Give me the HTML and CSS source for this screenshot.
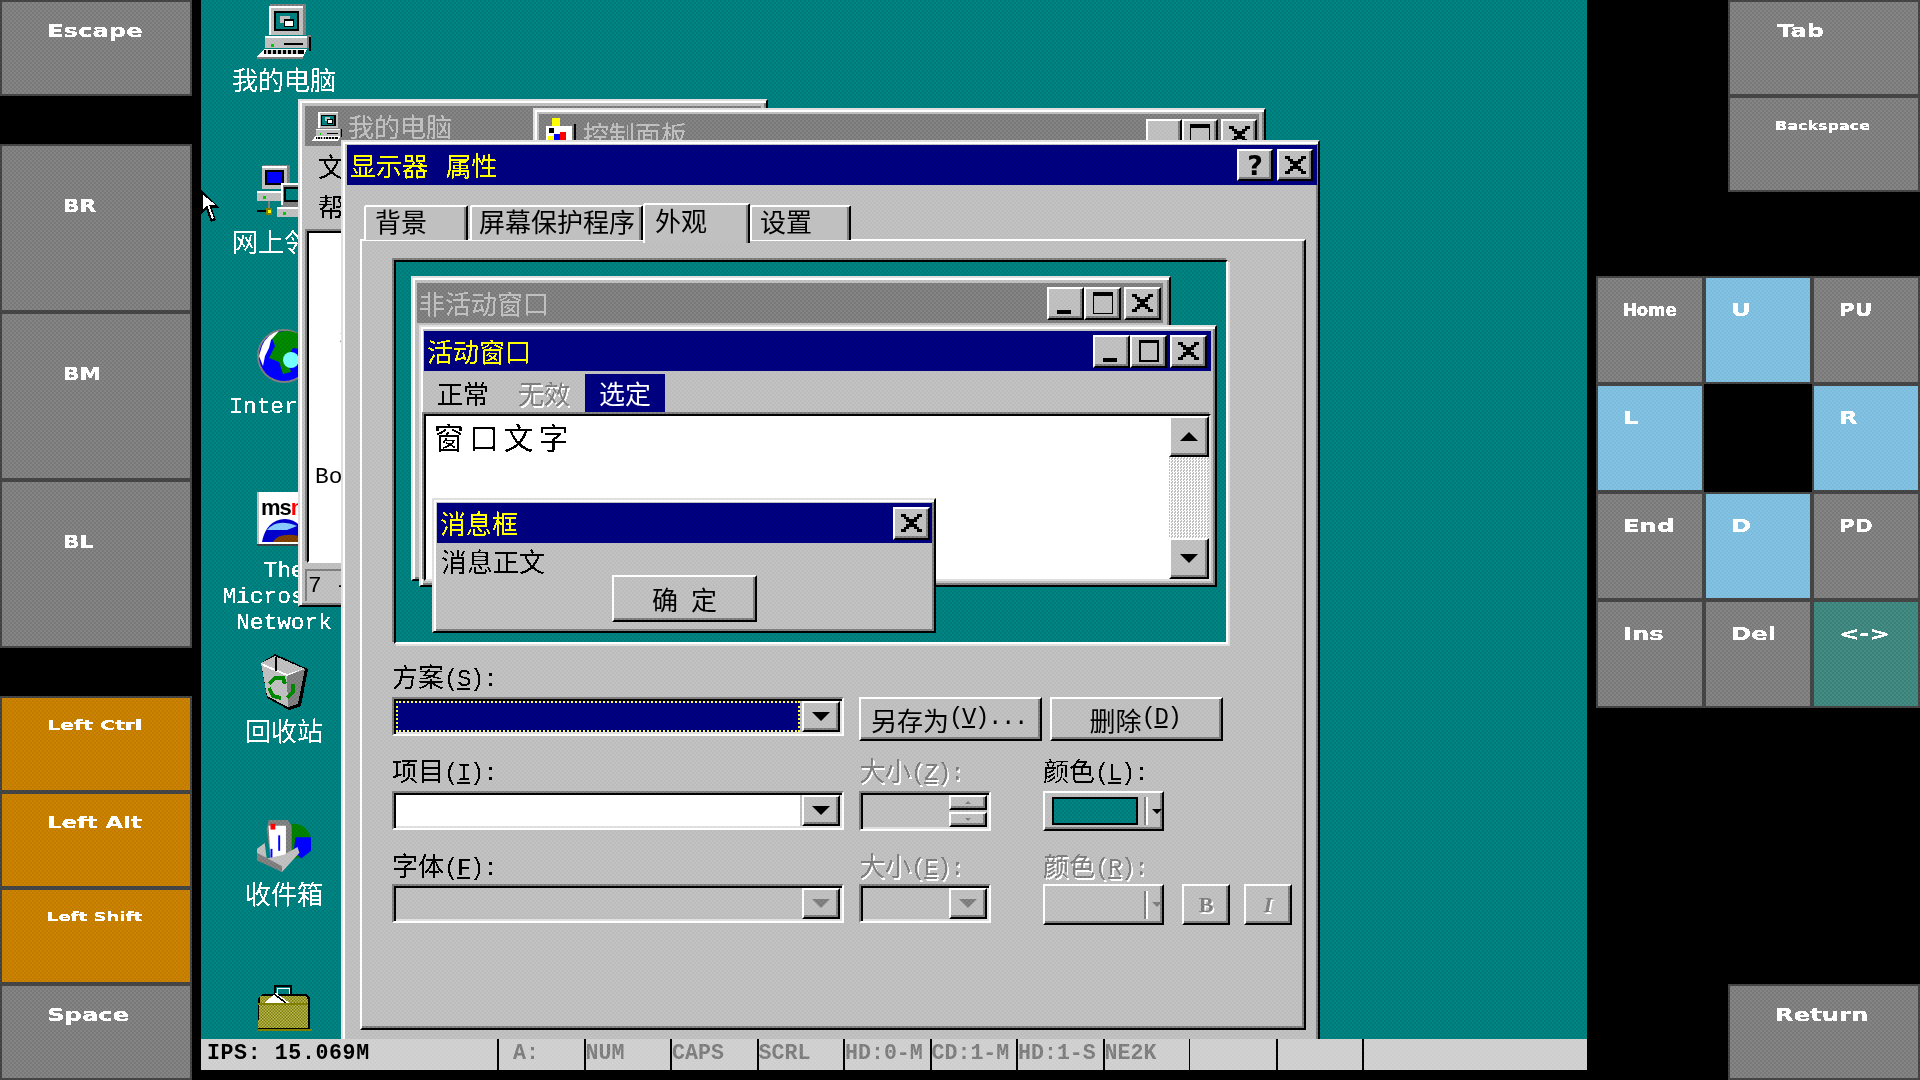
FILE: index.html
```html
<!DOCTYPE html>
<html lang="zh-CN">
<head>
<meta charset="utf-8">
<title>Win95 emulator</title>
<link rel="stylesheet" href="styles.css">
</head>
<body>
<svg class="defs" width="0" height="0" aria-hidden="true">
  <filter id="crisp" color-interpolation-filters="sRGB" x="-5%" y="-5%" width="110%" height="110%">
    <feComponentTransfer><feFuncA type="discrete" tableValues="0 1 1"/></feComponentTransfer>
  </filter>
  <filter id="crisp-thin" color-interpolation-filters="sRGB" x="-5%" y="-5%" width="110%" height="110%">
    <feComponentTransfer><feFuncA type="discrete" tableValues="0 1"/></feComponentTransfer>
  </filter>
  <pattern id="chk" width="3" height="3" patternUnits="userSpaceOnUse">
    <rect width="3" height="3" fill="#b8b860"/><rect width="1.5" height="1.5" fill="#808000"/><rect x="1.5" y="1.5" width="1.5" height="1.5" fill="#808000"/>
  </pattern>
  <symbol id="g-x" viewBox="0 0 8 7"><path shape-rendering="crispEdges" d="M0 0h2v1h1v1h2V1h1V0h2v1H7v1H6v1H5v1h1v1h1v1h1v1H6V6H5V5H3v1H2v1H0V6h1V5h1V4h1V3H2V2H1V1H0z"/></symbol>
  <symbol id="i-pc" viewBox="0 0 54 56">
    <g shape-rendering="crispEdges">
      <rect x="13" y="1" width="36" height="30" fill="#808080"/>
      <rect x="12" y="3" width="34" height="29" fill="#c0c0c0"/>
      <rect x="12" y="3" width="34" height="2" fill="#fff"/><rect x="12" y="3" width="2" height="29" fill="#fff"/>
      <rect x="46" y="3" width="3" height="29" fill="#808080"/>
      <rect x="17" y="8" width="25" height="20" fill="#000"/>
      <rect x="19" y="10" width="21" height="16" fill="#008080"/>
      <rect x="23" y="13" width="10" height="7" fill="#c0c0c0"/><rect x="27" y="16" width="10" height="8" fill="#000"/><rect x="28" y="18" width="8" height="5" fill="#fff"/>
      <rect x="8" y="33" width="42" height="12" fill="#c0c0c0"/><rect x="8" y="33" width="42" height="2" fill="#fff"/>
      <rect x="50" y="32" width="4" height="13" fill="#808080"/><rect x="52" y="34" width="2" height="14" fill="#000"/>
      <rect x="14" y="41" width="3" height="3" fill="#0c0"/><rect x="27" y="40" width="19" height="2" fill="#000"/>
      <polygon points="7,46 50,46 46,54 0,54" fill="#fff"/>
      <rect x="7" y="47" width="40" height="4" fill="#000"/>
      <path d="M9 47h2v4H9zM14 47h2v4h-2zM19 47h2v4h-2zM24 47h2v4h-2zM29 47h2v4h-2zM34 47h2v4h-2zM39 47h2v4h-2z" fill="#c0c0c0"/>
      <rect x="0" y="54" width="46" height="2" fill="#808080"/>
    </g>
  </symbol>
</svg>

<div class="app">
  <aside class="col-left">
    <div class="key h96"><span class="lbl">Escape</span></div>
    <div class="gap48"></div>
    <div class="key h168"><span class="lbl lbl-nar">BR</span></div>
    <div class="key h168"><span class="lbl lbl-nar">BM</span></div>
    <div class="key h168"><span class="lbl lbl-nar">BL</span></div>
    <div class="gap48"></div>
    <div class="key h96 orange"><span class="lbl lbl-ctrl">Left Ctrl</span></div>
    <div class="key h96 orange"><span class="lbl lbl-alt">Left Alt</span></div>
    <div class="key h96 orange"><span class="lbl lbl-shift">Left Shift</span></div>
    <div class="key h96"><span class="lbl">Space</span></div>
  </aside>

  <main class="mid">
    <div class="screen">
      <div class="dicon d1">
        <svg class="ico"><use href="#i-pc"/></svg>
        <span class="dlabel">我的电脑</span>
      </div>
      <div class="dicon d2">
        <svg class="ico" viewBox="0 0 54 56" shape-rendering="crispEdges">
          <rect x="6" y="0" width="27" height="24" fill="#808080"/><rect x="5" y="1" width="25" height="23" fill="#c0c0c0"/><rect x="5" y="1" width="25" height="2" fill="#fff"/>
          <rect x="8" y="5" width="19" height="15" fill="#000"/><rect x="10" y="7" width="15" height="11" fill="#00f"/>
          <rect x="0" y="26" width="28" height="10" fill="#c0c0c0"/><rect x="0" y="26" width="28" height="2" fill="#fff"/><rect x="6" y="31" width="3" height="3" fill="#0c0"/>
          <rect x="11" y="36" width="2" height="10" fill="#808080"/>
          <rect x="0" y="45" width="14" height="2" fill="#000"/><rect x="9" y="43" width="6" height="7" fill="#808000"/><rect x="11" y="45" width="3" height="3" fill="#ff0"/>
          <rect x="24" y="18" width="27" height="24" fill="#808080"/><rect x="24" y="18" width="25" height="2" fill="#fff"/><rect x="24" y="18" width="2" height="22" fill="#fff"/>
          <rect x="27" y="22" width="19" height="15" fill="#000"/><rect x="29" y="24" width="15" height="11" fill="#008080"/>
          <rect x="20" y="42" width="34" height="10" fill="#c0c0c0"/><rect x="20" y="42" width="34" height="2" fill="#fff"/><rect x="26" y="47" width="3" height="3" fill="#0c0"/>
        </svg>
        <span class="dlabel">网上邻居</span>
      </div>
      <div class="dicon d3">
        <svg class="ico" viewBox="0 0 54 56">
          <circle cx="27" cy="28" r="27" fill="#808080"/>
          <circle cx="27" cy="28" r="25" fill="#00f"/>
          <path d="M14 8 Q28-2 46 8 L50 22 36 20 30 30 34 44 26 46 22 34 12 30 18 18Z" fill="#080"/>
          <path d="M5 18 Q10 6 22 3 L14 12 12 20 8 28 6 38 2 28Z" fill="#fff"/>
          <circle cx="34" cy="32" r="8" fill="#7ff"/>
        </svg>
        <span class="dlabel mono">Internet</span>
      </div>
      <div class="dicon d4">
        <svg class="ico" viewBox="0 0 54 56">
          <rect x="0" y="0" width="54" height="53" fill="#fff"/>
          <rect x="0" y="52" width="54" height="2" fill="#404040"/>
          <rect x="0" y="0" width="2" height="52" fill="#c0c0c0"/>
          <text x="4" y="23" class="msn">ms<tspan fill="#f00">n</tspan></text>
          <path d="M5 50 Q9 28 28 27 Q46 28 50 50Z" fill="#00c"/>
          <path d="M10 38 Q20 26 40 34 L30 38Z" fill="#8cf"/>
          <path d="M16 50 Q22 40 42 44 L44 50Z" fill="#804000"/>
        </svg>
        <span class="dlabel mono msn-label">The<br>Microsoft<br>Network</span>
      </div>
      <div class="dicon d5">
        <svg class="ico" viewBox="0 0 54 56" shape-rendering="crispEdges">
          <polygon points="4,9 18,0 51,15 44,52 32,56 10,44" fill="#000"/>
          <polygon points="4,9 18,2 48,15 41,50 31,53 10,42" fill="#c0c0c0"/>
          <polygon points="30,22 48,15 41,50 31,53" fill="#808080"/>
          <polygon points="4,9 30,20 48,14 30,22 6,12" fill="#fff"/>
          <rect x="18" y="3" width="2" height="14" fill="#000"/>
          <path d="M12 30 L18 24 L26 24 L28 30 M36 30 L36 38 L30 44 M12 34 L16 42 L24 44" fill="none" stroke="#080" stroke-width="4"/>
        </svg>
        <span class="dlabel">回收站</span>
      </div>
      <div class="dicon d6">
        <svg class="ico" viewBox="0 0 56 56">
          <circle cx="38" cy="24" r="18" fill="#008000"/><path d="M40 20h16v14L46 42 38 34Z" fill="#00f"/>
          <polygon points="12,2 32,2 36,8 36,38 14,42 10,12" fill="#808080"/>
          <polygon points="12,8 30,8 30,38 14,42" fill="#fff"/>
          <rect x="14" y="6" width="5" height="6" fill="#f00"/><rect x="22" y="18" width="2" height="16" fill="#00f"/><rect x="14" y="32" width="2" height="10" fill="#00f"/>
          <polygon points="0,32 8,26 10,42 28,38 42,30 44,36 26,56 0,42" fill="#c0c0c0"/>
          <polygon points="0,36 0,44 26,56 26,50" fill="#808080"/>
        </svg>
        <span class="dlabel">收件箱</span>
      </div>
      <div class="dicon d7">
        <svg class="ico" viewBox="0 0 56 46" shape-rendering="crispEdges">
          <path d="M19 9V1h16v8" fill="none" stroke="#000" stroke-width="2"/>
          <path d="M21 9V3h12v6" fill="none" stroke="#fff" stroke-width="1"/>
          <polygon points="6,9 50,9 54,13 54,44 2,44 2,13" fill="#000"/>
          <polygon points="4,11 50,11 52,15 52,43 2,43" fill="url(#chk)"/>
          <polygon points="8,18 20,8 34,18" fill="#fff"/>
          <path d="M18 9l12 9" fill="none" stroke="#000" stroke-width="1.5"/>
          <rect x="2" y="18" width="50" height="2" fill="#808000"/>
          <rect x="2" y="44" width="54" height="2" fill="#808000"/>
        </svg>
      </div>

      <section class="win win-mypc">
        <header class="tbar tbar-off tbar-mypc">
          <svg class="ico-small"><use href="#i-pc"/></svg>
          <span class="ttext-off">我的电脑</span>
        </header>
        <nav class="mypc-menu"><span>文</span><span>帮</span></nav>
        <div class="mypc-client"><span class="frag mono">3</span><span class="bo mono">Bo</span></div>
        <div class="mypc-status"><span class="mono">7 -</span></div>
      </section>

      <section class="win win-ctrl">
        <header class="tbar tbar-off tbar-ctrl">
          <svg class="ico-cp" viewBox="0 0 30 24" shape-rendering="crispEdges">
            <rect x="6" y="0" width="8" height="12" fill="#ff0"/><rect x="0" y="8" width="26" height="16" fill="#fff"/>
            <rect x="3" y="10" width="5" height="5" fill="#000"/><rect x="14" y="14" width="6" height="10" fill="#f00"/><rect x="8" y="16" width="6" height="8" fill="#00f"/><rect x="2" y="18" width="6" height="6" fill="#ff0"/>
            <rect x="28" y="6" width="2" height="18" fill="#000"/>
          </svg>
          <span class="ttext-off">控制面板</span>
          <div class="capbtns ctrl-btns">
            <span class="btn cap cap-wide"></span>
            <span class="btn cap cap-wide"><i class="g-max g-max-thin"></i></span>
            <span class="btn cap cap-wide cap-sep"><svg class="g-x"><use href="#g-x"/></svg></span>
          </div>
        </header>
      </section>

      <section class="win dialog">
        <header class="tbar tbar-on tbar-dialog">
          <span class="ttext">显示器&nbsp;&nbsp;&nbsp;属性</span>
          <div class="capbtns">
            <span class="btn cap cap-wide q">?</span>
            <span class="btn cap cap-wide cap-sep"><svg class="g-x"><use href="#g-x"/></svg></span>
          </div>
        </header>
        <div class="tabs">
          <span class="tab t1">背景</span>
          <span class="tab t2">屏幕保护程序</span>
          <span class="tab tab-on t3">外观</span>
          <span class="tab t4">设置</span>
        </div>
        <div class="pane">
          <div class="preview">
            <section class="win pv-inactive">
              <header class="tbar tbar-off pv-tbar">
                <span class="ttext-off pv-ttext">非活动窗口</span>
                <div class="capbtns">
                  <span class="btn cap"><i class="g-min"></i></span>
                  <span class="btn cap"><i class="g-max g-max-thin"></i></span>
                  <span class="btn cap cap-sep"><svg class="g-x"><use href="#g-x"/></svg></span>
                </div>
              </header>
            </section>
            <section class="win pv-active">
              <header class="tbar tbar-on pv-tbar">
                <span class="ttext">活动窗口</span>
                <div class="capbtns">
                  <span class="btn cap"><i class="g-min"></i></span>
                  <span class="btn cap"><i class="g-max"></i></span>
                  <span class="btn cap cap-sep"><svg class="g-x"><use href="#g-x"/></svg></span>
                </div>
              </header>
              <nav class="pv-menu">
                <span class="mi">正常</span>
                <span class="mi disabled">无效</span>
                <span class="mi mi-sel">选定</span>
              </nav>
              <div class="pv-client">
                <div class="pv-text">窗口文字</div>
                <div class="sbar">
                  <span class="btn sbtn"><i class="tri tri-up"></i></span>
                  <span class="strack"></span>
                  <span class="btn sbtn"><i class="tri"></i></span>
                </div>
              </div>
            </section>
            <section class="win pv-msg">
              <header class="tbar tbar-on msg-tbar">
                <span class="ttext">消息框</span>
                <div class="capbtns"><span class="btn cap"><svg class="g-x"><use href="#g-x"/></svg></span></div>
              </header>
              <div class="msg-text txt">消息正文</div>
              <span class="btn msg-ok txt">确定</span>
            </section>
          </div>

          <div class="form">
            <div class="group g1">
              <label class="flabel">方案<span class="lat">(<u>S</u>):</span></label><span></span><span></span>
              <div class="combo c-wide"><span class="field field-sel"></span><span class="btn drop"><i class="tri"></i></span></div>
              <div class="btnpair">
                <span class="btn pbtn pb1 txt">另存为<span class="lat">(<u>V</u>)...</span></span>
                <span class="btn pbtn pb2 txt">删除<span class="lat">(<u>D</u>)</span></span>
              </div>
            </div>
            <div class="group g2">
              <label class="flabel">项目<span class="lat">(<u>I</u>):</span></label>
              <label class="flabel disabled">大小<span class="lat">(<u>Z</u>):</span></label>
              <label class="flabel">颜色<span class="lat">(<u>L</u>):</span></label>
              <div class="combo c-wide"><span class="field field-white"></span><span class="btn drop"><i class="tri"></i></span></div>
              <div class="combo c-small c-spin"><span class="field"></span><span class="spin"><span class="btn sp"><i class="tri tri-tiny tri-up"></i></span><span class="btn sp"><i class="tri tri-tiny"></i></span></span></div>
              <div class="btn colorbtn"><span class="swatch"></span><span class="csep"></span><i class="tri tri-small"></i></div>
            </div>
            <div class="group g3">
              <label class="flabel">字体<span class="lat">(<u>F</u>):</span></label>
              <label class="flabel disabled">大小<span class="lat">(<u>E</u>):</span></label>
              <label class="flabel disabled">颜色<span class="lat">(<u>R</u>):</span></label>
              <div class="combo c-wide"><span class="field"></span><span class="btn drop"><i class="tri tri-off"></i></span></div>
              <div class="combo c-small"><span class="field"></span><span class="btn drop"><i class="tri tri-off"></i></span></div>
              <div class="lastrow">
                <div class="btn colorbtn colorbtn-off"><span class="swatch swatch-off"></span><span class="csep"></span><i class="tri tri-small tri-off"></i></div>
                <span class="btn fmt disabled">B</span>
                <span class="btn fmt fmt-i disabled">I</span>
              </div>
            </div>
          </div>
        </div>
      </section>

      <svg class="cursor" viewBox="0 0 20 33" shape-rendering="crispEdges">
        <polygon points="0,0 0,24 5,19 10,32 15,30 11,18 19,18" fill="#000"/>
        <polygon points="2,5 2,19 6,15 11,29 13,28 8,15 15,15" fill="#fff"/>
      </svg>
    </div>
    <footer class="status">
      <span class="cell cell-ips">IPS: 15.069M</span>
      <span class="cell cell-a">A:</span>
      <span class="cell">NUM</span>
      <span class="cell">CAPS</span>
      <span class="cell">SCRL</span>
      <span class="cell">HD:0-M</span>
      <span class="cell">CD:1-M</span>
      <span class="cell">HD:1-S</span>
      <span class="cell">NE2K</span>
      <span class="cell cell-thin"></span>
      <span class="cell"></span>
      <span class="cell cell-last"></span>
    </footer>
  </main>

  <aside class="col-right">
    <div class="key h96 right-key"><span class="lbl lbl-tab">Tab</span></div>
    <div class="key h96 right-key"><span class="lbl lbl-back">Backspace</span></div>
    <div class="pad">
      <div class="key pk"><span class="lbl lbl-home">Home</span></div>
      <div class="key pk blue"><span class="lbl">U</span></div>
      <div class="key pk"><span class="lbl lbl-nar">PU</span></div>
      <div class="key pk blue"><span class="lbl">L</span></div>
      <div class="pk-empty"></div>
      <div class="key pk blue"><span class="lbl">R</span></div>
      <div class="key pk"><span class="lbl">End</span></div>
      <div class="key pk blue"><span class="lbl">D</span></div>
      <div class="key pk"><span class="lbl lbl-nar">PD</span></div>
      <div class="key pk"><span class="lbl">Ins</span></div>
      <div class="key pk"><span class="lbl">Del</span></div>
      <div class="key pk teal"><span class="lbl">&lt;-&gt;</span></div>
    </div>
    <div class="key h96 right-key key-return"><span class="lbl">Return</span></div>
  </aside>
</div>
<div class="dither"></div>
</body>
</html>
```
FILE: styles.css
```css
*{box-sizing:border-box}
html,body{margin:0;padding:0;background:#000}
body{width:1920px;height:1080px;overflow:hidden;position:relative;font-family:"Noto Sans CJK SC","Liberation Sans",sans-serif;color:#000}
.defs{position:absolute}
.app{display:flex;width:1920px;height:1080px;background:#000}
.dither{position:absolute;inset:0;pointer-events:none;mix-blend-mode:overlay;background:repeating-conic-gradient(#858585 0 25%,#787878 0 50%) 0 0/4px 4px}

/* key columns */
.col-left{width:192px;display:flex;flex-direction:column;flex:none}
.gap48{height:48px;flex:none}
.col-right{width:333px;margin-left:auto;flex:none;display:flex;flex-direction:column;align-items:flex-end}
.key{border:2px solid #454545;background:#808080;flex:none}
.h96{height:96px;width:192px;padding:16px 0 0 45px}
.h168{height:168px;width:192px;padding:47px 0 0 61px}
.orange{background:#c88000}
.blue{background:#80c0e0}
.teal{background:#408880}
.lbl{display:inline-block;color:#fff;font:700 18px/20px "DejaVu Sans",sans-serif;transform:scaleX(1.35);transform-origin:0 0;white-space:nowrap;filter:url(#crisp)}
.lbl-ctrl{font-size:14px;transform:translateY(-3px) scaleX(1.47)}
.lbl-alt{font-size:16px;transform:translateY(-1px) scaleX(1.42)}
.lbl-shift{font-size:13px;transform:translateY(-4px) scaleX(1.39)}
.lbl-back{font-size:13px;transform:translateY(-3px) scaleX(1.23)}
.lbl-tab{margin-left:2px}
.lbl-home{transform:scaleX(.92)}
.lbl-nar{transform:scaleX(1.2)}
.pad{display:grid;grid-template-columns:repeat(3,108px);grid-auto-rows:108px;width:324px;margin-top:84px}
.pk{padding:19px 0 0 25px}
.key-return{margin-top:auto}

/* emulator surface */
.mid{width:1386px;margin-left:9px;flex:none;display:flex;flex-direction:column}
.screen{height:1039px;position:relative;overflow:hidden;background:#008080;flex:none}
.status{height:31px;background:#d0d0d0;display:flex;flex:none;font:700 21.6px/29px "Liberation Mono",monospace;color:#808080}
.cell{width:86.5px;border-left:2px solid #000;white-space:nowrap;padding-left:0;overflow:visible}
.cell-ips{width:296px;border-left:0;padding-left:6px;color:#000;letter-spacing:.6px}
.cell-a{padding-left:14px}
.cell-thin{border-left-width:1px}
.cell-last{flex:1}

/* desktop icons */
.dicon{position:absolute;left:13px;width:140px;display:flex;flex-direction:column;align-items:center}
.ico{width:54px;height:56px;display:block;flex:none}
.dlabel{color:#fff;font-size:26px;line-height:30px;margin-top:5px;white-space:nowrap;filter:url(#crisp-thin)}
.mono{font-family:"Liberation Mono",monospace;font-size:22.8px}
.dlabel.mono{line-height:26px;text-align:center;margin-top:10px;filter:url(#crisp)}
.msn{font:900 22px "Liberation Sans",sans-serif;letter-spacing:-1px}
.d1{top:3px}
.d2{top:165px}
.d3{top:328px}
.d4{top:492px}
.d5{top:654px}
.d6{top:817px}
.d7{top:985px}
.d7 .ico{height:46px;width:56px}
.cursor{position:absolute;left:0;top:190px;width:20px;height:33px}

/* windows */
.win{position:absolute;background:#c0c0c0;border:2px solid;border-color:#e0e0e0 #000 #000 #e0e0e0;box-shadow:inset 2px 2px 0 #fff,inset -2px -2px 0 #808080}
.tbar{display:flex;align-items:center;height:40px;flex:none}
.tbar-off{background:#808080}
.tbar-on{background:#000080}
.ttext{color:#ff0;font-size:26px;line-height:30px;margin-left:3px;white-space:nowrap;filter:url(#crisp-thin)}
.ttext-off{color:#c0c0c0;font-size:26px;line-height:30px;white-space:nowrap;filter:url(#crisp-thin)}
.capbtns{margin-left:auto;display:flex;align-items:center}

.btn{background:#c0c0c0;border:2px solid;border-color:#fff #000 #000 #fff;box-shadow:inset -2px -2px 0 #808080;display:flex;align-items:center;justify-content:center;flex:none}
.cap{width:37px;height:33px;margin-right:0}
.cap-wide{width:36px;height:32px}
.cap-sep{margin-left:3px}
.q{font:700 27px/1 "DejaVu Sans",sans-serif;margin-right:1px;filter:none}
.g-x{width:21px;height:18px;display:block}
.g-min{display:block;width:14px;height:4px;background:#000;align-self:flex-end;margin:0 4px 4px 0}
.g-max{display:block;width:20px;height:22px;border:2px solid #000;border-top-width:3px}
.g-max-thin{border-width:1px;border-top-width:4px}

/* my computer behind */
.win-mypc{left:97px;top:99px;width:470px;height:508px;padding:5px 0 0 5px}
.tbar-mypc{margin-right:5px;height:40px;padding:0 0 0 5px;gap:4px}
.ico-small{width:34px;height:32px;flex:none}
.mypc-menu{display:flex;flex-direction:column;font-size:26px;line-height:40px;padding-left:13px;height:85px;white-space:nowrap;filter:url(#crisp-thin)}
.mypc-client{height:332px;width:50px;margin-left:2px;background:#fff;border:2px solid;border-color:#000 transparent transparent #000;padding-left:6px;padding-top:93px;overflow:hidden;box-shadow:-2px -2px 0 #808080;display:flex;flex-direction:column;align-items:flex-start}
.frag{line-height:26px;margin-left:24px;height:26px}
.bo{line-height:26px;margin-top:112px}
.mypc-status{margin-top:6px;height:32px;width:60px;padding-left:1px;line-height:28px;border-top:2px solid #808080;border-left:2px solid #808080}
.win-ctrl{left:332px;top:108px;width:733px;height:100px;padding:4px 5px 0 4px}
.tbar-ctrl{height:40px;padding-left:7px;gap:7px;align-items:flex-start}
.tbar-ctrl .ttext-off{margin-top:5px}
.ico-cp{width:30px;height:24px;flex:none;margin-top:4px}
.ctrl-btns{margin-right:2px;margin-top:5px}

/* dialog */
.dialog{left:140px;top:140px;width:979px;height:910px;padding:3px 1px 0 4px}
.tbar-dialog{padding-right:4px}
.tabs{display:flex;align-items:flex-end;margin:17px 0 0 17px;height:38px;position:relative;z-index:1}
.tab{height:35px;border:2px solid;border-bottom:0;border-color:#fff #000 transparent #fff;border-radius:3px 3px 0 0;box-shadow:inset -2px 0 0 #808080;background:#c0c0c0;font-size:26px;line-height:28px;padding-left:9px;white-space:nowrap;filter:url(#crisp-thin)}
.t1{width:104px;margin-right:2px}
.t2{width:173px;padding-left:7px}
.t3{width:107px}
.t4{width:101px;padding-left:8px}
.tab-on{height:40px;margin-bottom:-3px;padding-left:10px;line-height:29px;position:relative;top:0}
.pane{margin:-1px 0 0 13px;width:946px;height:791px;background:#c0c0c0;border:2px solid;border-color:#fff #000 #000 #fff;box-shadow:inset -2px -2px 0 #808080;padding:19px 0 0 32px;overflow:visible}

.preview{position:relative;width:834px;height:384px;background:#008080;border:2px solid;border-color:#000 #fff #fff #000;box-shadow:-2px -2px 0 #808080,2px 2px 0 #e0e0e0}
.pv-inactive{left:15px;top:14px;width:760px;height:305px;padding:5px 6px 0 4px}
.pv-tbar{padding-right:0}
.pv-inactive .capbtns{margin-right:2px}
.pv-active .capbtns{margin-right:4px}
.pv-ttext{margin-left:2px}
.pv-active{left:23px;top:63px;width:798px;height:262px;padding:4px 4px 0 3px}
.pv-menu{display:flex;gap:1px;height:41px;margin-left:-1px;padding-top:3px;font-size:26px;line-height:38px}
.mi{padding:0 14px;height:38px;white-space:nowrap;filter:url(#crisp-thin)}
.disabled{color:#808080;text-shadow:1.5px 1.5px 0 #fff}
.mi-sel{background:#000080;color:#fff}
.pv-client{display:flex;height:167px;margin:2px 0 0 0;background:#fff;border:2px solid;border-color:#000 #e0e0e0 #e0e0e0 #000;box-shadow:-2px -2px 0 #808080}
.pv-text{flex:1;font-size:30px;line-height:38px;letter-spacing:4.8px;padding:1px 0 0 8px;filter:url(#crisp-thin)}
.sbar{width:40px;display:flex;flex-direction:column;flex:none}
.sbtn{height:41px}
.strack{flex:1;background:repeating-conic-gradient(#fff 0 25%,#c0c0c0 0 50%) 0 0/3px 3px}
.tri{display:block;width:0;height:0;border-left:9px solid transparent;border-right:9px solid transparent;border-top:9px solid #000}
.tri-up{border-top:0;border-bottom:9px solid #000}
.tri-small{border-left-width:5px;border-right-width:5px;border-top-width:5px}
.tri-tiny{border-left-width:3px;border-right-width:3px;border-top-width:3px;border-top-color:#808080}
.tri-tiny.tri-up{border-top:0;border-bottom:3px solid #808080}
.tri-off{border-top-color:#808080}
.pv-msg{left:36px;top:236px;width:504px;height:135px;padding:3px 2px 0 3px}
.msg-tbar{padding-right:2px}
.msg-text{margin:3px 0 0 4px;line-height:30px;font-size:26px}
.txt{filter:url(#crisp-thin)}
.msg-ok{width:145px;height:47px;margin:-1px 0 0 175px;font-size:26px;letter-spacing:13px;text-indent:13px}

.form{margin:18px 0 0 -2px;display:flex;flex-direction:column}
.group{display:grid;grid-template-columns:467px 184px 260px;align-items:start}
.flabel{font-size:26px;line-height:27px;height:35px;white-space:nowrap;filter:url(#crisp-thin)}
.lat{font:24px/1 "Liberation Mono",monospace;letter-spacing:-1.4px;position:relative;top:-1px}
.g2{margin-top:15px}
.g3{margin-top:18px}
.g3 .flabel{line-height:32px}
.combo{display:flex;height:39px;padding:2px 2px 2px 2px;background:#c0c0c0;border:2px solid;border-color:#808080 #fff #fff #808080;box-shadow:inset 2px 2px 0 #000,inset -2px -2px 0 #e0e0e0;gap:2px}
.c-wide{width:452px}
.c-small{width:132px}
.c-spin{height:40px}
.field{flex:1;min-width:0}
.field-white{background:#fff}
.field-sel{background:#000080;border:2px dotted #ffff40}
.drop{width:38px}
.spin{width:38px;display:flex;flex-direction:column;gap:2px}
.sp{height:15px;flex:1}
.btnpair{display:flex;gap:8px;grid-column:2/4}
.pbtn{height:44px;font-size:26px;white-space:nowrap;padding-right:3px}
.pb1{width:183px}
.pb2{width:173px}
.colorbtn{width:121px;height:40px;justify-content:flex-start;padding-left:7px;gap:6px}
.swatch{width:86px;height:28px;background:#008080;border:2px solid #000;flex:none}
.swatch-off{background:transparent;border-color:transparent}
.csep{width:2px;height:28px;background:#808080;box-shadow:2px 0 0 #fff;flex:none}
.colorbtn-off{height:41px}
.lastrow{display:flex;align-items:flex-start}
.fmt{width:48px;height:41px;font:700 22px/1 "Liberation Serif",serif;margin-left:18px}
.fmt-i{font-style:italic;margin-left:14px}
```
